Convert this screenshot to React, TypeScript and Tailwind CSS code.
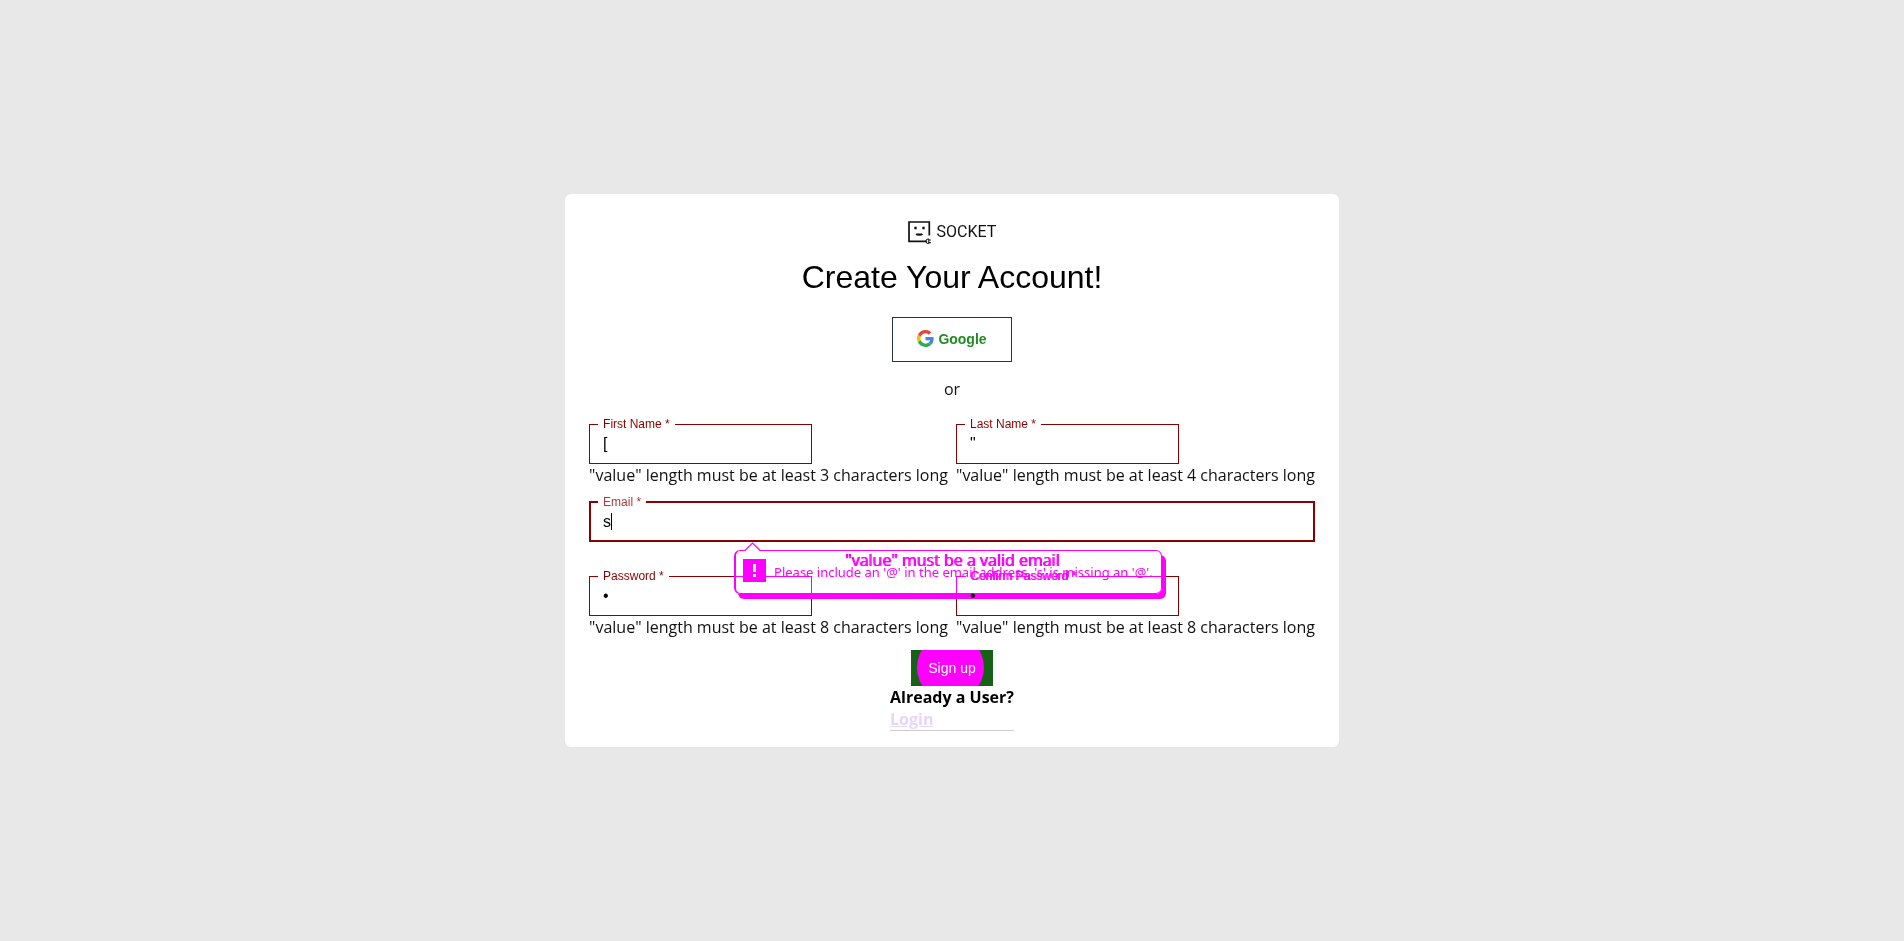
import { useState } from "react";

type FieldProps = {
  id: string;
  label: string;
  initial: string;
  type?: string;
  error?: string;
  focused?: boolean;
  wide?: boolean;
  heavy?: boolean;
};

function Field({ id, label, initial, type = "text", error, focused, wide, heavy }: FieldProps) {
  const [value, setValue] = useState(initial);
  return (
    <div>
      <fieldset
        className={`min-w-0 border-[#8b0000] ${focused ? "relative border-2 px-[7px] pb-1" : "border px-2 pb-[5px]"} ${wide ? "w-full" : "w-[223px]"}`}
      >
        <legend
          className={`px-[5px] font-['Liberation_Sans',sans-serif] text-xs leading-3 ${focused ? "text-[#a83c3c]" : "text-[#8b0000]"} ${heavy ? "[text-shadow:1px_0_0_#8b0000]" : ""}`}
        >
          <label htmlFor={id}>{label} *</label>
        </legend>
        <input
          id={id}
          type={type}
          value={value}
          onChange={(e) => setValue(e.target.value)}
          className="relative z-20 block h-7 w-full bg-transparent px-[5px] font-['Liberation_Sans',sans-serif] text-base text-black outline-none"
        />
        {focused && <span className="absolute left-5 top-[5px] h-[17px] w-px bg-black" />}
      </fieldset>
      {error && <p>{error}</p>}
    </div>
  );
}

function Logo() {
  return (
    <div className="flex h-6 items-center gap-1.5">
      <svg width="23" height="23" viewBox="0 0 23 23" fill="none" stroke="#111" strokeWidth="1.7">
        <path d="M21.3 14.5V1H1v19.3h17" />
        <path d="M6.3 7h2.4M14.3 7h2.4" strokeWidth="2.4" />
        <path d="M8.2 13c1 .8 5.2.8 6.2 0" strokeWidth="2.2" />
        <path d="M17.5 20.3h1.7M20.5 19h2.3M20.5 21.6h2.3" strokeWidth="1.1" />
        <path d="M20.8 18h-.6a2.2 2.2 0 0 0 0 4.6h.6z" strokeWidth="1" />
      </svg>
      <span className="font-['Roboto',sans-serif] text-base leading-6 text-[#111]">SOCKET</span>
    </div>
  );
}

function GoogleIcon() {
  return (
    <svg width="17" height="17" viewBox="0 0 48 48">
      <path fill="#EA4335" d="M24 9.5c3.54 0 6.71 1.22 9.21 3.6l6.85-6.85C35.9 2.38 30.47 0 24 0 14.62 0 6.51 5.38 2.56 13.22l7.98 6.19C12.43 13.72 17.74 9.5 24 9.5z" />
      <path fill="#4285F4" d="M46.98 24.55c0-1.57-.15-3.09-.38-4.55H24v9.02h12.94c-.58 2.96-2.26 5.48-4.78 7.18l7.73 6c4.51-4.18 7.09-10.36 7.09-17.65z" />
      <path fill="#FBBC05" d="M10.53 28.59c-.48-1.45-.76-2.99-.76-4.59s.27-3.14.76-4.59l-7.98-6.19C.92 16.46 0 20.12 0 24c0 3.88.92 7.54 2.56 10.78l7.97-6.19z" />
      <path fill="#34A853" d="M24 48c6.48 0 11.93-2.13 15.89-5.81l-7.73-6c-2.15 1.45-4.92 2.3-8.16 2.3-6.26 0-11.57-4.22-13.47-9.91l-7.98 6.19C6.51 42.62 14.62 48 24 48z" />
    </svg>
  );
}

function ValidationBubble() {
  return (
    <div role="alert" className="absolute left-[145px] top-full w-[428px] text-[#f0f]">
      <div className="mt-2 flex h-11 items-center gap-2 rounded-md border border-l-2 border-[#f0f] px-[7px] pb-1 shadow-[4px_5px_0_#f0f]">
        <span className="flex size-[23px] items-center justify-center bg-[#f0f]">
          <svg width="3" height="13" viewBox="0 0 3 13" fill="#fff">
            <path d="M0 0h3v8H0zM0 10h3v3H0z" />
          </svg>
        </span>
        <span className="whitespace-nowrap pt-1 font-['Noto_Sans',sans-serif] text-[13px]">
          Please include an '@' in the email address. 's' is missing an '@'.
        </span>
      </div>
      <div className="absolute inset-x-0 bottom-0 top-2 rounded-md bg-[#f0f] mix-blend-screen" />
      <svg className="absolute left-2.5 top-0" width="17" height="9" viewBox="0 0 17 9" fill="#fff">
        <path d="M.5 9 8.5 1l8 8" stroke="#f0f" strokeWidth="1.2" />
      </svg>
    </div>
  );
}

export default function App() {
  return (
    <main className="flex min-h-screen items-center justify-center bg-[#e8e8e8] font-['Open_Sans',sans-serif] text-base leading-[22px] text-[#111]">
      <section className="flex flex-col items-center rounded-md bg-white px-6 pb-4 pt-[26px]">
        <Logo />
        <h1 className="mt-[13px] font-['Liberation_Sans',sans-serif] text-[32px] leading-10 text-black">Create Your Account!</h1>
        <button
          type="button"
          className="mt-5 flex h-[45px] w-[120px] items-center justify-center gap-1 border border-[#26344a] pb-0.5 font-['Liberation_Sans',sans-serif] text-sm font-bold text-[#228b22]"
        >
          <GoogleIcon />
          Google
        </button>
        <p className="mt-4">or</p>
        <form className="mt-[18px] flex flex-col items-center" onSubmit={(e) => e.preventDefault()} noValidate>
          <div className="grid grid-cols-2 gap-2">
            <Field id="first" label="First Name" initial="[" error={'"value" length must be at least 3 characters long'} />
            <Field id="last" label="Last Name" initial={'"'} error={'"value" length must be at least 4 characters long'} />
          </div>
          <div className="relative mt-2.5 w-full">
            <Field id="email" label="Email" initial="s" type="email" focused wide />
            <ValidationBubble />
          </div>
          <p className="mt-2 leading-5 text-[#f0f] [text-shadow:1px_0_0_#f0f]">"value" must be a valid email</p>
          <div className="grid grid-cols-2 gap-2">
            <Field id="password" label="Password" initial="x" type="password" error={'"value" length must be at least 8 characters long'} />
            <Field id="confirm" label="Confirm Password" initial="x" type="password" heavy error={'"value" length must be at least 8 characters long'} />
          </div>
          <button
            type="submit"
            className="relative mt-3 h-9 w-[82px] overflow-hidden bg-[#176117] font-['Liberation_Sans',sans-serif] text-sm text-white"
          >
            <span className="absolute -top-4 left-1.5 size-[67px] rounded-full bg-[#f0f]" />
            <span className="relative">Sign up</span>
          </button>
        </form>
        <div className="border-b border-[#ccc] font-bold text-black">
          <p>Already a User?</p>
          <a href="#login" className="block text-[#e8d5fa] underline">Login</a>
        </div>
      </section>
    </main>
  );
}
